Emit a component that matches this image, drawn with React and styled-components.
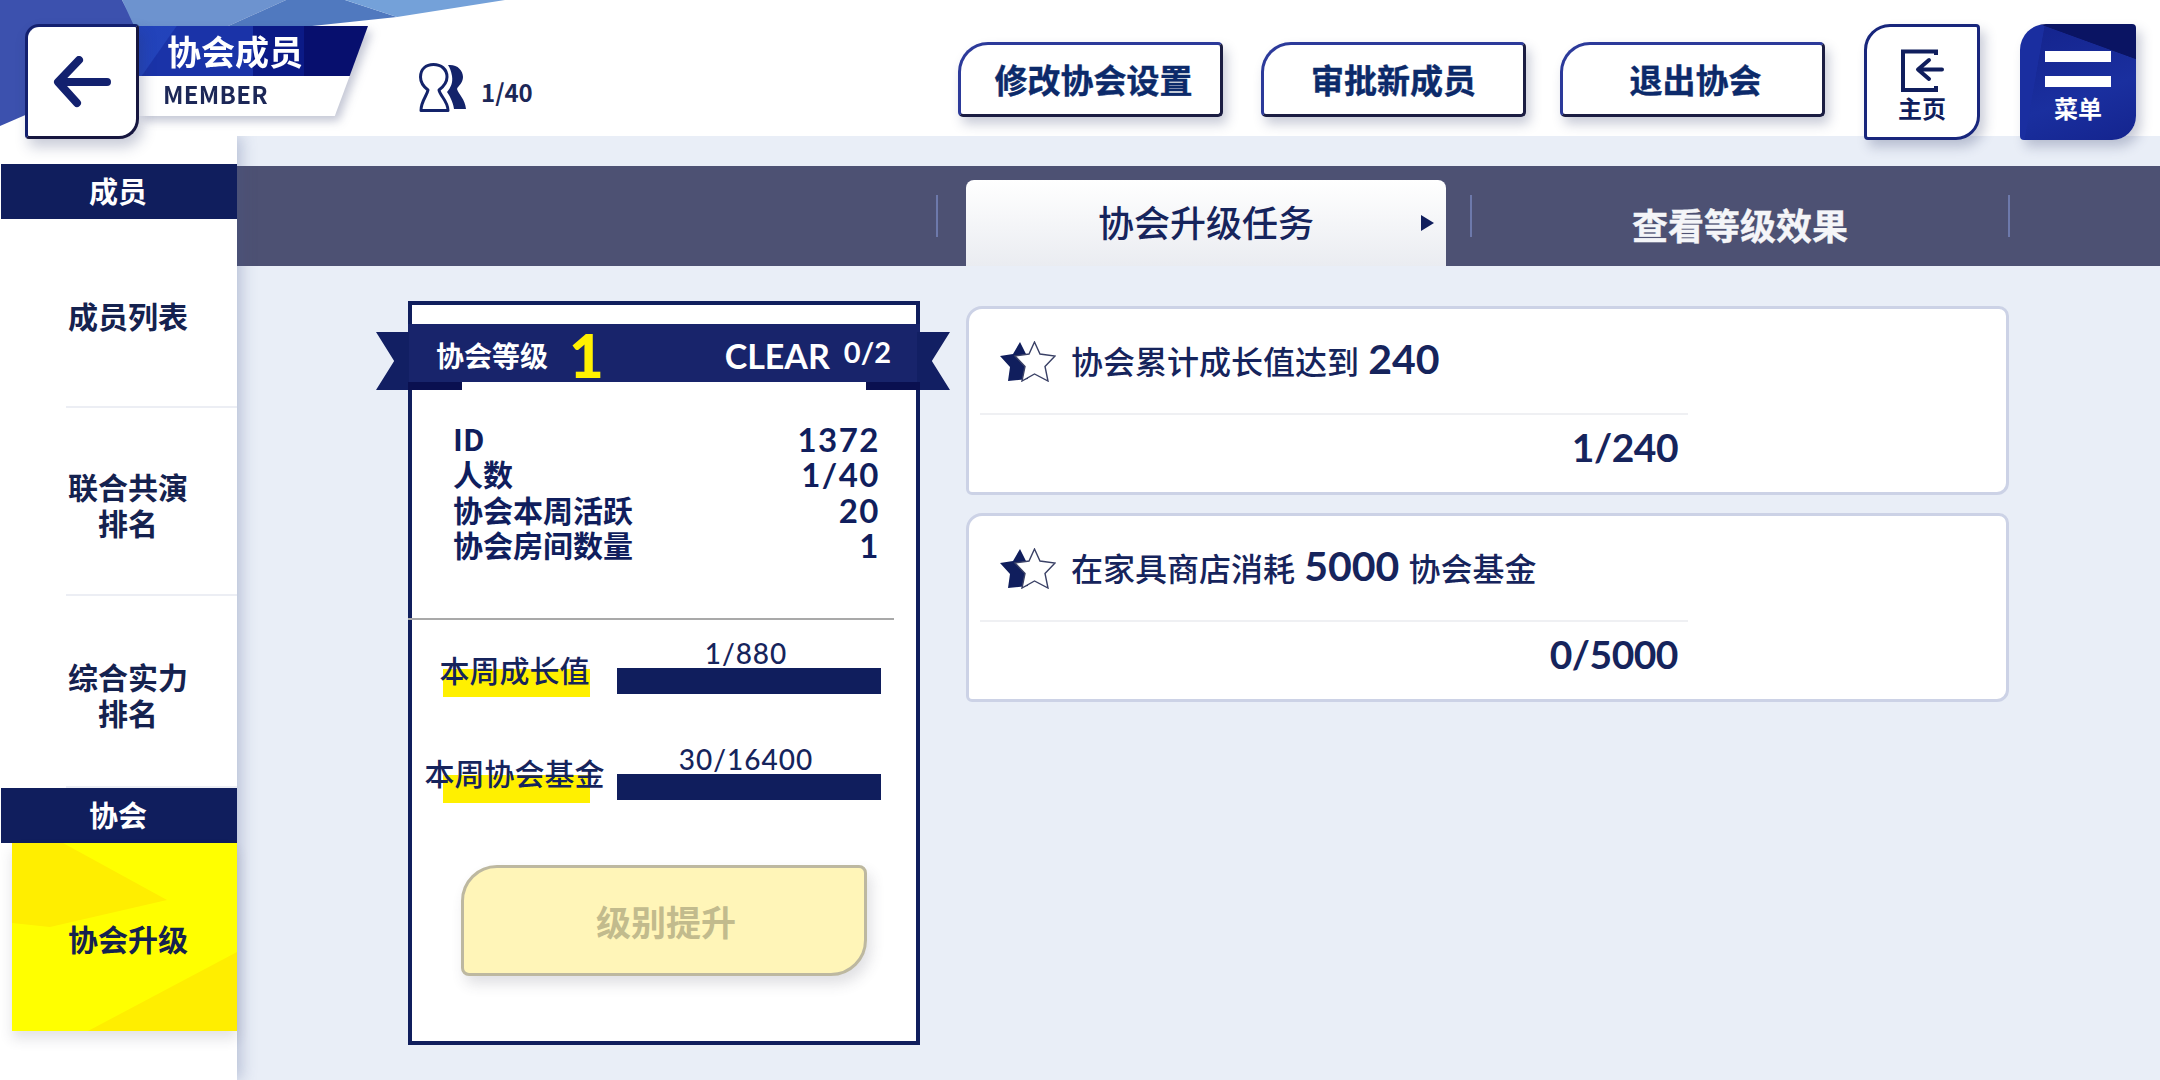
import React from "react";
import styled, { createGlobalStyle } from "styled-components";

const CJK = `"Noto Sans CJK SC", "Noto Sans", sans-serif`;
const NUM = `Lato, "Noto Sans CJK SC", sans-serif`;
const NAVY = "#101e5d";

const GlobalStyle = createGlobalStyle`
  html, body { margin: 0; padding: 0; background: #e9eef7; }
  * { box-sizing: border-box; }
`;

const Page = styled.div`
  width: 2160px;
  height: 1080px;
  overflow: hidden;
  font-family: ${CJK};
  color: ${NAVY};
  background: #e9eef7;
  display: flex;
  flex-direction: column;
`;

/* top bar */
const TopBar = styled.header`
  position: relative;
  height: 136px;
  flex: none;
  background: #fff;
  display: flex;
  align-items: flex-start;
  padding: 24px 24px 0 25px;
  z-index: 3;
`;

const CornerArt = styled.svg`
  position: absolute;
  left: 0;
  top: 0;
`;

const BackButton = styled.div`
  position: relative;
  z-index: 2;
  width: 114px;
  height: 115px;
  flex: none;
  background: #fff;
  border: 3px solid #13206f;
  border-right-color: #16163f;
  border-bottom-color: #16163f;
  border-radius: 14px 4px 20px 4px;
  box-shadow: 4px 8px 14px rgba(40, 50, 100, 0.25);
  display: flex;
  align-items: center;
  justify-content: center;
`;

const TitleBlock = styled.div`
  position: relative;
  z-index: 1;
  margin-top: 2px;
  width: 229px;
  flex: none;
  filter: drop-shadow(4px 5px 5px rgba(40, 50, 100, 0.28));
`;

const TitleTop = styled.div`
  height: 50px;
  padding-left: 28px;
  font-size: 34px;
  font-weight: 700;
  line-height: 50px;
  color: #fff;
  background:
    linear-gradient(125deg, rgba(36, 70, 190, 0.85) 0 14%, transparent 14.5%),
    linear-gradient(90deg, #1a33a8 0 50%, #0b1a86 50% 72%, #070f6e 72%);
  clip-path: polygon(0 0, 100% 0, 92% 100%, 0 100%);
`;

const TitleSub = styled.div`
  height: 40px;
  padding-left: 24px;
  font-size: 24px;
  font-weight: 700;
  line-height: 36px;
  letter-spacing: 0.3px;
  color: #1c2757;
  background: #fff;
  clip-path: polygon(0 0, 92% 0, 85.5% 100%, 0 100%);
`;

const MemberCount = styled.div`
  margin: 39px 0 0 51px;
  display: flex;
  align-items: center;
  gap: 14px;
  font-size: 24px;
  font-weight: 700;
  color: #1c2757;
`;

const CountText = styled.span`
  margin-top: 6px;
`;

const Actions = styled.div`
  margin: 18px 39px 0 auto;
  display: flex;
  gap: 35px;
`;

const ActionButton = styled.div`
  width: 265px;
  height: 75px;
  background: #fff;
  border: 3px solid #2c3a9a;
  border-right-color: #1b1d42;
  border-bottom-color: #1b1d42;
  border-radius: 30px 5px 5px 5px;
  box-shadow: 4px 7px 12px rgba(40, 50, 100, 0.25);
  display: flex;
  align-items: center;
  justify-content: center;
  padding: 0 0 2px 6px;
  font-size: 33px;
  font-weight: 700;
  -webkit-text-stroke: 0.4px #0c2a6a;
  color: #0c2a6a;
  &:nth-child(2) {
    margin-left: 3px;
    margin-right: -1px;
    padding-left: 0;
  }
`;

const SquareButton = styled.div`
  width: 116px;
  height: 116px;
  flex: none;
  margin-left: ${(p) => p.$gap || 0}px;
  border-radius: 26px 4px 24px 4px;
  box-shadow: 5px 7px 12px rgba(40, 50, 100, 0.25);
  display: flex;
  flex-direction: column;
  align-items: center;
  justify-content: flex-end;
  padding-bottom: 18px;
  font-size: 24px;
  font-weight: 700;
  line-height: 28px;
`;

const HomeButton = styled(SquareButton)`
  background: #fff;
  border: 3px solid #18267c;
  color: ${NAVY};
  padding-bottom: 15px;
  svg { margin-bottom: 1px; }
`;

const MenuButton = styled(SquareButton)`
  color: #fff;
  background:
    linear-gradient(200deg, #0a1463 0 22%, transparent 22.5%),
    linear-gradient(100deg, #1a2ea0 0 18%, transparent 18.5%),
    linear-gradient(160deg, #14238c, #1a2f9f 60%, #14248e);
`;

const MenuBar = styled.span`
  display: block;
  width: 66px;
  height: 11px;
  background: #fff;
  margin-bottom: ${(p) => p.$gap}px;
`;

/* body */
const Body = styled.div`
  flex: 1;
  display: flex;
  min-height: 0;
`;

const Sidebar = styled.aside`
  position: relative;
  z-index: 2;
  width: 237px;
  flex: none;
  padding-top: 28px;
  background: #fff;
  box-shadow: 5px 0 14px rgba(70, 85, 140, 0.28);
`;

const SectionBar = styled.div`
  height: 55px;
  margin-left: 1px;
  background: ${NAVY};
  color: #fff;
  font-size: 29px;
  font-weight: 700;
  line-height: 52px;
  text-align: center;
  padding-right: 2px;
`;

const NavItem = styled.div`
  height: ${(p) => p.$h}px;
  margin-left: 19px;
  padding-top: 3px;
  display: flex;
  align-items: center;
  justify-content: center;
  text-align: center;
  font-size: 30px;
  font-weight: 700;
  line-height: 36px;
  color: #15224f;
  position: relative;
  &::after {
    content: "";
    position: absolute;
    left: 47px;
    right: 0;
    bottom: 0;
    height: 2px;
    background: #eceef4;
  }
`;

const ActiveItem = styled.div`
  position: relative;
  height: 188px;
  margin-left: 12px;
  padding: 2px 0 0 7px;
  display: flex;
  align-items: center;
  justify-content: center;
  font-size: 30px;
  font-weight: 700;
  color: #15224f;
  background: #ffff00;
  box-shadow: 0 8px 12px rgba(60, 60, 80, 0.14);
  span { position: relative; }
`;

const ActiveArt = styled.svg`
  position: absolute;
  left: 0;
  top: 0;
`;

const Main = styled.main`
  flex: 1;
  min-width: 0;
  padding-top: 30px;
`;

const TabBand = styled.div`
  height: 100px;
  padding-left: 699px;
  background: #4d5173;
  display: flex;
  align-items: flex-end;
`;

const TabSep = styled.span`
  align-self: center;
  width: 2px;
  height: 42px;
  margin: 0 ${(p) => p.$right || 0}px 0 ${(p) => p.$left || 0}px;
  background: #6d79ab;
`;

const ActiveTab = styled.div`
  position: relative;
  width: 480px;
  height: 86px;
  border-radius: 8px 8px 0 0;
  background: linear-gradient(180deg, #fff 0%, #eaecf1 100%);
  display: flex;
  align-items: center;
  justify-content: center;
  padding: 0 0 4px 0;
  font-size: 36px;
  font-weight: 500;
  color: #16245c;
`;

const TabArrow = styled.span`
  position: absolute;
  right: 12px;
  top: 35px;
  border-left: 13px solid ${NAVY};
  border-top: 8px solid transparent;
  border-bottom: 8px solid transparent;
`;

const PlainTab = styled.div`
  width: 536px;
  height: 100%;
  padding-top: 16px;
  display: flex;
  align-items: center;
  justify-content: center;
  font-size: 36px;
  font-weight: 700;
  -webkit-text-stroke: 0.4px #f4f5f8;
  color: #f4f5f8;
`;

const Content = styled.div`
  display: flex;
  align-items: flex-start;
  padding: 35px 0 0 171px;
  gap: 46px;
`;

/* guild card */
const GuildCard = styled.section`
  width: 512px;
  height: 744px;
  flex: none;
  background: #fff;
  border: 4px solid ${NAVY};
  padding-top: 19px;
`;

const Ribbon = styled.div`
  position: relative;
  height: 58px;
  margin: 0 -4px;
  padding: 4px 29px 0 28px;
  background: #18246b;
  color: #fff;
  display: flex;
  align-items: center;
  justify-content: space-between;
`;

const RibbonTail = styled.span`
  position: absolute;
  top: 8px;
  width: 33px;
  height: 58px;
  background: #121f63;
  ${(p) =>
    p.$right
      ? `right: -30px; clip-path: polygon(0 0, 100% 0, 45% 50%, 100% 100%, 0 100%);`
      : `left: -32px; clip-path: polygon(0 0, 100% 0, 100% 100%, 0 100%, 55% 50%);`}
`;

const RibbonFold = styled.span`
  position: absolute;
  top: 58px;
  width: 54px;
  height: 8px;
  background: #0a1050;
  ${(p) => (p.$right ? `right: 0;` : `left: 0;`)}
`;

const RibbonSide = styled.div`
  display: flex;
  align-items: center;
`;

const RibbonLabel = styled.span`
  font-size: 28px;
  font-weight: 700;
`;

const LevelNumber = styled.span`
  font-family: ${NUM};
  font-size: 60px;
  font-weight: 900;
  line-height: 54px;
  color: #fff000;
  margin-left: 21px;
`;

const ClearText = styled.span`
  font-family: ${NUM};
  font-size: 34px;
  font-weight: 700;
`;

const ClearCount = styled.span`
  font-family: ${NUM};
  font-size: 29px;
  font-weight: 700;
  margin-left: 14px;
  position: relative;
  top: -4px;
`;

const StatList = styled.div`
  margin-top: 39px;
  padding: 0 37px 0 41px;
`;

const StatRow = styled.div`
  height: 35.3px;
  display: flex;
  align-items: center;
  justify-content: space-between;
  font-size: 30px;
  font-weight: 700;
  line-height: 35px;
`;

const StatValue = styled.span`
  font-family: ${NUM};
  font-size: 33px;
  font-weight: 700;
  letter-spacing: 1.5px;
  margin-right: -1px;
  position: relative;
  top: 1px;
`;

const CardDivider = styled.div`
  margin: 56px 0 0 -4px;
  width: 486px;
  height: 2px;
  background: #a9a9a9;
`;

const ProgressRow = styled.div`
  margin-top: ${(p) => p.$top}px;
  display: flex;
  align-items: flex-end;
  height: 52px;
`;

const ProgressLabel = styled.div`
  position: relative;
  width: 205px;
  flex: none;
  height: 52px;
  display: flex;
  justify-content: center;
  font-size: 30px;
  font-weight: 500;
  line-height: 36px;
  color: #16245c;
  padding-top: ${(p) => p.$pad}px;
  white-space: nowrap;
  &::before {
    content: "";
    position: absolute;
    left: 31px;
    top: 24px;
    width: 147px;
    height: 28px;
    background: #fff000;
  }
  span { position: relative; }
`;

const ProgressBar = styled.div`
  position: relative;
  width: 264px;
  height: 26px;
  margin: 0 0 3px 0;
  background: ${NAVY};
`;

const ProgressValue = styled.span`
  position: absolute;
  left: 0;
  right: 6px;
  bottom: 100%;
  text-align: center;
  font-family: ${NUM};
  font-size: 28px;
  font-weight: 500;
  line-height: 30px;
  letter-spacing: 1px;
  color: #16245c;
`;

const LevelUpButton = styled.div`
  width: 406px;
  height: 111px;
  margin: 62px 0 0 49px;
  background: #fff5b8;
  border: 3px solid #bdb8a0;
  border-radius: 36px 8px 36px 8px;
  box-shadow: 4px 8px 14px rgba(60, 60, 80, 0.16);
  display: flex;
  align-items: center;
  justify-content: center;
  padding: 0 0 0 4px;
  font-size: 35px;
  font-weight: 700;
  color: #c2bb8d;
`;

/* tasks */
const TaskList = styled.div`
  width: 1043px;
  margin-top: 5px;
  display: flex;
  flex-direction: column;
  gap: 18px;
`;

const TaskCard = styled.div`
  height: 189px;
  background: #fff;
  border: 3px solid #ccd2e6;
  border-radius: 16px 10px 12px 6px;
`;

const TaskHead = styled.div`
  height: 104px;
  padding: 0 0 5px 31px;
  display: flex;
  align-items: center;
  gap: 15px;
  font-size: 32px;
  font-weight: 500;
  color: #16245c;
  svg { margin-top: 6px; }
`;

const TaskNum = styled.span`
  font-family: ${NUM};
  font-size: 41px;
  font-weight: 700;
  margin: 0 2px;
`;

const TaskLine = styled.div`
  width: 708px;
  height: 2px;
  margin-left: 11px;
  background: #eff0f3;
`;

const TaskValue = styled.div`
  width: 708px;
  margin-left: 11px;
  padding: 4px 10px 0 0;
  text-align: right;
  font-family: ${NUM};
  font-size: 39px;
  font-weight: 700;
  line-height: 56px;
  letter-spacing: -0.5px;
  color: #16245c;
`;

function Stars() {
  return (
    <svg width="56" height="41" viewBox="0 0 56 41">
      <polygon points="20,1 26,13 28,38 8,40 10,26 0,15 13,13" fill="#101e5d" />
      <polygon
        points="34.5,1 40,13 55,15 45,25.5 48,40 34.5,33 22,40 25,25.5 15,15 29,13"
        fill="#fff"
        stroke="#3a4166"
        strokeWidth="1.4"
      />
    </svg>
  );
}

const nav = [
  { h: 189, lines: ["成员列表"] },
  { h: 188, lines: ["联合共演", "排名"] },
  { h: 192, lines: ["综合实力", "排名"] },
];

const stats = [
  ["ID", "1372"],
  ["人数", "1/40"],
  ["协会本周活跃", "20"],
  ["协会房间数量", "1"],
];

const tasks = [
  { before: "协会累计成长值达到", num: "240", after: "", value: "1/240" },
  { before: "在家具商店消耗", num: "5000", after: "协会基金", value: "0/5000" },
];

export default function App() {
  return (
    <Page>
      <GlobalStyle />
      <TopBar>
        <CornerArt width="510" height="130" viewBox="0 0 510 130">
          <polygon points="0,0 122,0 136,26 60,100 0,126" fill="#3c51ae" />
          <polygon points="122,0 286,0 226,27 136,30" fill="#6d93cf" />
          <polygon points="286,0 345,0 397,17 312,26 226,27" fill="#5079bf" />
          <polygon points="345,0 505,0 397,17" fill="#74a1d9" />
          <polygon points="60,30 140,30 140,100 60,100" fill="#3c51ae" />
        </CornerArt>
        <BackButton>
          <svg width="58" height="52" viewBox="0 0 58 52" fill="none">
            <path
              d="M26 4 L5 26 L24 47 M6 26 H54"
              stroke="#13216f"
              strokeWidth="8"
              strokeLinecap="round"
              strokeLinejoin="round"
            />
          </svg>
        </BackButton>
        <TitleBlock>
          <TitleTop>协会成员</TitleTop>
          <TitleSub>MEMBER</TitleSub>
        </TitleBlock>
        <MemberCount>
          <svg width="48" height="50" viewBox="0 0 48 50">
            <path
              d="M29 2 C38 1 44 7 44 14 C44 20 39 23 38 26 C40 32 46 36 47 46 L35 46 C34 38 30 32 28 29 C32 24 34 20 33 13 C32 8 31 5 29 2 Z"
              fill="#13236a"
            />
            <path
              d="M9 27 C5 24 1.5 20 1.5 14 C1.5 6 7 1.5 14.5 1.5 C22 1.5 28 6 28 14 C28 20 24 24 20 27 C21 33 29 38 29 47.5 L2 47.5 C2 38 8 33 9 27 Z"
              fill="#fff"
              stroke="#13236a"
              strokeWidth="3"
              strokeLinejoin="round"
            />
          </svg>
          <CountText>1/40</CountText>
        </MemberCount>
        <Actions>
          <ActionButton>修改协会设置</ActionButton>
          <ActionButton>审批新成员</ActionButton>
          <ActionButton>退出协会</ActionButton>
        </Actions>
        <HomeButton>
          <svg width="44" height="44" viewBox="0 0 44 44" fill="none">
            <path d="M36 6 V2.5 H3 V41 H36 V37" stroke="#101e5d" strokeWidth="4" />
            <path
              d="M29 11 L18 20.5 L29 30 M19 20.5 H42"
              stroke="#101e5d"
              strokeWidth="4"
              strokeLinecap="round"
              strokeLinejoin="round"
            />
          </svg>
          主页
        </HomeButton>
        <MenuButton $gap={40}>
          <MenuBar $gap={14} />
          <MenuBar $gap={7} />
          菜单
        </MenuButton>
      </TopBar>
      <Body>
        <Sidebar>
          <SectionBar>成员</SectionBar>
          {nav.map((item) => (
            <NavItem key={item.lines[0]} $h={item.h}>
              <div>
                {item.lines.map((l) => (
                  <div key={l}>{l}</div>
                ))}
              </div>
            </NavItem>
          ))}
          <SectionBar>协会</SectionBar>
          <ActiveItem>
            <ActiveArt width="225" height="188" viewBox="0 0 225 188">
              <polygon points="0,0 51,0 155,57 38,84 0,80" fill="#ffee00" />
              <polygon points="76,188 225,109 225,188" fill="#ffee00" />
            </ActiveArt>
            <span>协会升级</span>
          </ActiveItem>
        </Sidebar>
        <Main>
          <TabBand>
            <TabSep $right={28} />
            <ActiveTab>
              协会升级任务
              <TabArrow />
            </ActiveTab>
            <TabSep $left={24} />
            <PlainTab>查看等级效果</PlainTab>
            <TabSep />
          </TabBand>
          <Content>
            <GuildCard>
              <Ribbon>
                <RibbonTail />
                <RibbonTail $right />
                <RibbonFold />
                <RibbonFold $right />
                <RibbonSide>
                  <RibbonLabel>协会等级</RibbonLabel>
                  <LevelNumber>1</LevelNumber>
                </RibbonSide>
                <RibbonSide>
                  <ClearText>CLEAR</ClearText>
                  <ClearCount>0/2</ClearCount>
                </RibbonSide>
              </Ribbon>
              <StatList>
                {stats.map(([k, v]) => (
                  <StatRow key={k}>
                    <span>{k}</span>
                    <StatValue>{v}</StatValue>
                  </StatRow>
                ))}
              </StatList>
              <CardDivider />
              <ProgressRow $top={25}>
                <ProgressLabel $pad={6}>
                  <span>本周成长值</span>
                </ProgressLabel>
                <ProgressBar>
                  <ProgressValue>1/880</ProgressValue>
                </ProgressBar>
              </ProgressRow>
              <ProgressRow $top={54}>
                <ProgressLabel $pad={3}>
                  <span>本周协会基金</span>
                </ProgressLabel>
                <ProgressBar>
                  <ProgressValue>30/16400</ProgressValue>
                </ProgressBar>
              </ProgressRow>
              <LevelUpButton>级别提升</LevelUpButton>
            </GuildCard>
            <TaskList>
              {tasks.map((t) => (
                <TaskCard key={t.value}>
                  <TaskHead>
                    <Stars />
                    <span>
                      {t.before} <TaskNum>{t.num}</TaskNum> {t.after}
                    </span>
                  </TaskHead>
                  <TaskLine />
                  <TaskValue>{t.value}</TaskValue>
                </TaskCard>
              ))}
            </TaskList>
          </Content>
        </Main>
      </Body>
    </Page>
  );
}
